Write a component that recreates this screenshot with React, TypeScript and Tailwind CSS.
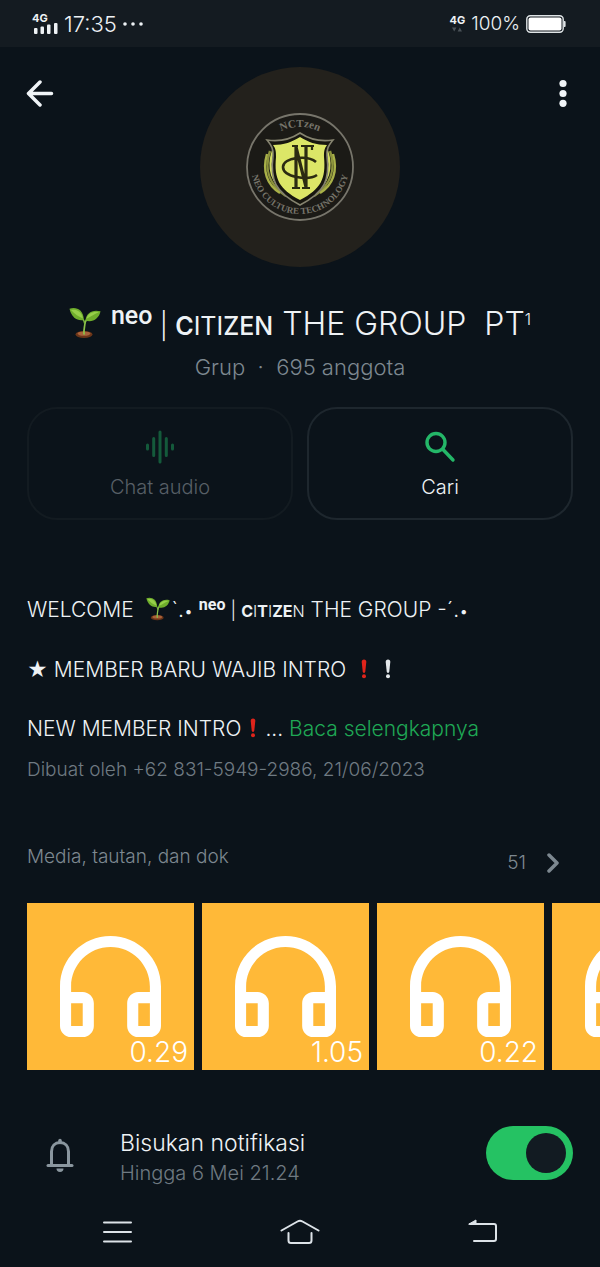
import { useState } from 'react';

const media = [
  { id: 1, duration: '0.29' },
  { id: 2, duration: '1.05' },
  { id: 3, duration: '0.22' },
  { id: 4, duration: '' },
];

function Seedling({ className }: { className: string }) {
  return (
    <svg viewBox="0 0 32 32" className={className} aria-hidden="true">
      <ellipse cx="15" cy="27.5" rx="8.5" ry="3.4" fill="#6b3518" />
      <ellipse cx="15" cy="26.6" rx="6.5" ry="2.2" fill="#a9623a" />
      <path d="M15 27c-.4-4 .6-7 .8-9.500c.2-2.500 1-4 2.200-5.500" fill="none" stroke="#8bc34a" strokeWidth="1.700" strokeLinecap="round" />
      <path d="M15.800 17c-.3-2-.8-3.600-2-5" fill="none" stroke="#7cb342" strokeWidth="1.500" />
      <path d="M14.800 13C9 14.500 2.500 11 .5 1.800 7-.4 14.500 2.500 14.800 13z" fill="#6fae2c" />
      <path d="M14 11.500C10 10 5.500 7 2 3c5-1.200 10.500 1 12 8.500z" fill="#97cf4a" />
      <path d="M16.500 13.500C17 6 23.500 2 31.500 4.300 30 12 23 16 16.500 13.500z" fill="#6fae2c" />
      <path d="M17.500 11.800C18.500 6.500 24 3.800 30 5.300c-4 1.500-8 4.500-12.500 6.500z" fill="#97cf4a" />
    </svg>
  );
}

function Exclamation({ className }: { className: string }) {
  return (
    <svg viewBox="0 0 8 20" className={className} fill="currentColor" aria-hidden="true">
      <path d="M4 .5c1.500 0 2.400 1 2.300 2.400L5.300 12.600c-.1.900-.6 1.400-1.300 1.400s-1.200-.5-1.300-1.400L1.700 2.900C1.600 1.500 2.500.5 4 .5z" />
      <circle cx="4" cy="17.300" r="2" />
    </svg>
  );
}

function StatusBar() {
  return (
    <div className="flex h-[47px] items-center justify-between bg-[#141b21] pr-[34px] pl-8 text-[#eef2f5]">
      <div className="flex items-center">
        <div className="flex w-7 flex-col">
          <span className="text-[11px] leading-[10px] font-bold">4G</span>
          <svg viewBox="0 0 26 11" className="h-[11px] w-[26px]" fill="currentColor" aria-hidden="true">
            <rect x="2" y="5" width="3.500" height="6" rx="1" />
            <rect x="8.500" y="3.500" width="3.500" height="7.500" rx="1" />
            <rect x="15" y="1.500" width="3.500" height="9.500" rx="1" />
            <rect x="22" y="0" width="3.500" height="11" rx="1" />
          </svg>
        </div>
        <span className="ml-1 text-[22px] leading-7 font-light">17:35</span>
        <svg viewBox="0 0 20 4" className="ml-1.5 h-1 w-5" fill="currentColor" aria-hidden="true">
          <circle cx="2" cy="2" r="1.800" />
          <circle cx="10" cy="2" r="1.800" />
          <circle cx="18" cy="2" r="1.800" />
        </svg>
      </div>
      <div className="flex items-center">
        <div className="flex flex-col items-center">
          <span className="text-[11px] leading-[10px] font-bold">4G</span>
          <svg viewBox="0 0 10 5" className="mt-0.5 h-[5px] w-2.5 text-[#4a5258]" fill="currentColor" aria-hidden="true">
            <path d="M0 .5h4.400L2.200 4.500zM5.600 4.500H10L7.800.5z" />
          </svg>
        </div>
        <span className="ml-1.5 text-[19px] leading-7 font-light">100%</span>
        <svg viewBox="0 0 40 18" className="ml-1.5 h-[18px] w-10" aria-hidden="true">
          <rect x=".8" y=".8" width="36.400" height="16.400" rx="3.500" fill="none" stroke="#dfe4e6" strokeWidth="1.400" />
          <rect x="2.500" y="2.500" width="33" height="13" rx="2" fill="#fff" />
          <path d="M38 6h.6a1 1 0 0 1 1 1v4a1 1 0 0 1-1 1H38z" fill="#dfe4e6" />
        </svg>
      </div>
    </div>
  );
}

function GroupAvatar() {
  return (
    <svg viewBox="0 0 200 200" className="size-[200px]" role="img" aria-label="Foto grup">
      <defs>
        <path id="arc-top" d="M56 104a44 44 0 0 1 88 0" />
        <path id="arc-bottom" d="M51 98a49 49 0 0 0 98 0" />
      </defs>
      <circle cx="100" cy="100" r="100" fill="#23211c" />
      <circle cx="100" cy="100" r="53" fill="#1b1a16" stroke="#77756b" strokeWidth="1.800" />
      <g fill="none" strokeWidth="2.400">
        <path d="M70 84c-6 18-1 34 16 45" stroke="#8c933c" />
        <path d="M73 84c-6 18-1 32 14 43" stroke="#d3de62" />
        <path d="M67 87c-5 17 0 31 13 39" stroke="#a9b148" />
        <path d="M130 84c6 18 1 34-16 45" stroke="#8c933c" />
        <path d="M127 84c6 18 1 32-14 43" stroke="#d3de62" />
        <path d="M133 87c5 17 0 31-13 39" stroke="#a9b148" />
      </g>
      <path d="M100 66c-9 6-20 9-33 7 3 4 7 8 6 16-3 24 2 36 27 49 25-13 30-25 27-49-1-8 3-12 6-16-13 2-24-1-33-7z" fill="#17160f" stroke="#85836f" strokeWidth="1.600" />
      <path d="M100 70c-8 5-16 8-27 8 3 4 3 7 3 12-2 22 3 32 24 43 21-11 26-21 24-43 0-5 0-8 3-12-11 0-19-3-27-8z" fill="#dce667" />
      <g fill="none" stroke="#2c2b12">
        <path d="M96 121V80l10 40V80" strokeWidth="3.200" />
        <path d="M92 121h8M92 79h6M101 79h13M112 79v4M102 121h8" strokeWidth="2.200" />
        <path d="M116 95c-8-7-33-5-33 5s25 14 34 8" strokeWidth="2.600" />
      </g>
      <g fill="#77756b" fontFamily="Liberation Serif, serif" fontWeight="700">
        <text fontSize="11" textAnchor="middle">
          <textPath href="#arc-top" startOffset="50%">NCTzen</textPath>
        </text>
        <text fontSize="9" textAnchor="middle">
          <textPath href="#arc-bottom" startOffset="50%">NEO CULTURE TECHNOLOGY</textPath>
        </text>
      </g>
    </svg>
  );
}

function Header() {
  return (
    <header className="flex items-start justify-between px-[26px] pt-5">
      <button type="button" aria-label="Kembali" className="mt-3 text-[#f0f4f7]">
        <svg viewBox="0 0 28 28" className="size-7" fill="none" stroke="currentColor" strokeWidth="3.500" strokeLinecap="round" strokeLinejoin="round">
          <path d="M14 3 2.500 14.500 14 26M3 14.500h22.500" />
        </svg>
      </button>
      <GroupAvatar />
      <button type="button" aria-label="Opsi lainnya" className="mt-3 flex w-7 justify-end pr-[7px] text-[#f0f4f7]">
        <svg viewBox="0 0 8 28" className="h-7 w-2" fill="currentColor">
          <circle cx="4" cy="4.500" r="3.600" />
          <circle cx="4" cy="14.500" r="3.600" />
          <circle cx="4" cy="24.300" r="3.600" />
        </svg>
      </button>
    </header>
  );
}

function Actions() {
  return (
    <div className="mt-[26px] grid grid-cols-2 gap-3.5 px-[27px]">
      <button type="button" disabled className="flex h-[113px] flex-col items-center rounded-[30px] border-2 border-[#131b21] pt-5 text-[#575f66]">
        <svg viewBox="0 0 32 36" className="h-9 w-8 text-[#145a3b]" stroke="currentColor" strokeWidth="3" strokeLinecap="round" aria-hidden="true">
          <path d="M3.500 16v4M9.700 9.500v17M16 3v30M22.300 9.500v17M28.500 16v4" />
        </svg>
        <span className="mt-2.5 text-[20px] leading-6 font-light">Chat audio</span>
      </button>
      <button type="button" className="flex h-[113px] flex-col items-center rounded-[30px] border-2 border-[#1e272e] pt-5 text-[#eef2f5]">
        <svg viewBox="0 0 32 36" className="h-9 w-8 text-[#24b768]" fill="none" stroke="currentColor" strokeWidth="3.400" strokeLinecap="round" aria-hidden="true">
          <circle cx="12" cy="13.500" r="9" />
          <path d="M19 20.500 29 31" />
        </svg>
        <span className="mt-2.5 text-[20px] leading-6 font-light">Cari</span>
      </button>
    </div>
  );
}

function MediaTile({ duration }: { duration: string }) {
  return (
    <a href="#media" className="relative flex size-[167px] shrink-0 items-center justify-center bg-[#ffb938] text-white">
      <svg viewBox="0 0 100 100" className="size-[101px]" aria-hidden="true">
        <path
          fill="currentColor"
          fillRule="evenodd"
          d="M50 0C22.400 0 0 22.400 0 50v39c0 6 5 11 11 11h11.500c6 0 11-5 11-11V66.500c0-6-5-11-11-11H11V50c0-21.500 17.500-39 39-39s39 17.500 39 39v5.500H77.500c-6 0-11 5-11 11V89c0 6 5 11 11 11H89c6 0 11-5 11-11V50C100 22.400 77.600 0 50 0zM11 66.500h11.500V89H11zM77.500 66.500H89V89H77.500z"
        />
      </svg>
      <span className="absolute right-1.5 bottom-0.5 text-[28px] leading-8 font-light">{duration}</span>
    </a>
  );
}

function NavBar() {
  return (
    <nav className="mt-[9px] flex h-[70px] items-center justify-between px-[102px] text-[#dde3e8]">
      <button type="button" aria-label="Menu">
        <svg viewBox="0 0 30 26" className="h-[26px] w-[30px]" stroke="currentColor" strokeWidth="2" strokeLinecap="round">
          <path d="M2 3.500h27M2 13h27M2 22.500h27" />
        </svg>
      </button>
      <button type="button" aria-label="Beranda">
        <svg viewBox="0 0 40 26" className="h-[26px] w-10" fill="none" stroke="currentColor" strokeWidth="2" strokeLinecap="round">
          <path d="M1.500 11.500 17.500 2.500q2.500-1.400 5 0L38.500 11.500M8.500 14v7.500q0 2.500 2.500 2.500h18q2.500 0 2.500-2.500V14" />
        </svg>
      </button>
      <button type="button" aria-label="Kembali ke layar sebelumnya">
        <svg viewBox="0 0 30 26" className="h-[26px] w-[30px]" fill="none" stroke="currentColor" strokeWidth="2" strokeLinecap="round">
          <path d="M2 5h24q2 0 2 2v13q0 2-2 2H6" />
          <path d="M1 5 8 1v4z" fill="currentColor" strokeWidth="1" />
        </svg>
      </button>
    </nav>
  );
}

export default function App() {
  const [muted, setMuted] = useState(true);

  return (
    <div className="min-h-screen overflow-hidden bg-[#0b131a] font-['Inter','Noto_Sans',sans-serif] text-[#eef2f5]">
      <StatusBar />
      <Header />

      <section className="mt-9 text-center">
        <h1 className="text-[32px] leading-[42px] font-light whitespace-pre">
          <Seedling className="mr-2.5 inline-block size-8 align-[-4px]" />
          <span className="align-[11px] font-['Roboto'] text-[25px] leading-none font-medium">neo</span>
          <span className="text-[26px]"> | </span>
          <span className="text-[25px]"><b className="font-semibold">C</b><span className="font-normal">ITI</span><b className="font-medium">ZEN</b></span> THE GROUP  PT<span className="align-[10px] text-[16px] leading-none">1</span>
        </h1>
        <p className="mt-1.5 text-[22px] leading-7 font-light whitespace-pre text-[#7d8890]">Grup  ·  695 anggota</p>
      </section>

      <Actions />

      <section className="mt-[75px] px-[27px] text-[21px] leading-[30px] font-light">
        <p className="whitespace-pre">
          WELCOME  <Seedling className="mr-0.5 inline-block size-6 align-[-4px]" />`.<span className="text-[16px]">•</span>{' '}
          <span className="align-[7px] font-['Roboto'] text-[16px] leading-none font-bold">neo</span>
          <span className="text-[18px]"> | </span>
          <span className="text-[16px]"><b className="font-bold">C</b>I<b className="font-bold">T</b>I<b className="font-bold">ZE</b>N</span> THE GROUP -´.<span className="text-[16px]">•</span>
        </p>
        <p className="mt-[29px]">
          <span className="text-[20px]">★</span> MEMBER BARU WAJIB INTRO
          <Exclamation className="ml-3.5 inline-block h-5 w-2 align-[-2px] text-[#e0241b]" />
          <Exclamation className="ml-4 inline-block h-5 w-2 align-[-2px] text-[#e3e7ea]" />
        </p>
        <p className="mt-[29px]">
          NEW MEMBER INTRO
          <Exclamation className="mx-2 inline-block h-5 w-2 align-[-2px] text-[#e0241b]" />
          ... <a href="#deskripsi" className="text-[#1fa855]">Baca selengkapnya</a>
        </p>
        <p className="mt-3 text-[19px] leading-7 text-[#6f7a82]">Dibuat oleh +62 831-5949-2986, 21/06/2023</p>
      </section>

      <section className="mt-[57px] pl-[27px] font-light text-[#7d8890]">
        <div className="flex items-start justify-between pr-10">
          <h2 className="mt-0.5 text-[19px] leading-7">Media, tautan, dan dok</h2>
          <a href="#media" className="mt-2 flex items-center gap-5 text-[19px] leading-7">
            51
            <svg viewBox="0 0 14 20" className="h-5 w-3.5" fill="none" stroke="currentColor" strokeWidth="3.500" strokeLinecap="round" strokeLinejoin="round" aria-hidden="true">
              <path d="m3 2 8 8-8 8" />
            </svg>
          </a>
        </div>
        <div className="mt-[26px] flex gap-2 overflow-hidden">
          {media.map((item) => (
            <MediaTile key={item.id} duration={item.duration} />
          ))}
        </div>
      </section>

      <section className="mt-14 flex items-start px-[27px]">
        <svg viewBox="0 0 28 34" className="mt-3 ml-[19px] h-[34px] w-7 text-[#8a969e]" fill="none" stroke="currentColor" strokeWidth="3" aria-hidden="true">
          <path d="M5.500 26V13.500C5.500 8 9 4.500 14 4.500s8.500 3.500 8.500 9V26" />
          <path d="M2 27.500h24" strokeLinecap="round" />
          <path d="M14 2.500v2" strokeLinecap="round" strokeWidth="3.500" />
          <path d="M10.500 30.500h7a3.500 3.500 0 0 1-7 0z" fill="currentColor" stroke="none" />
        </svg>
        <label htmlFor="mute" className="mt-0.5 ml-[46px] flex flex-1 flex-col font-light">
          <span className="text-[23px] leading-[30px]">Bisukan notifikasi</span>
          <span className="text-[20px] leading-[30px] text-[#6f7a82]">Hingga 6 Mei 21.24</span>
        </label>
        <input
          id="mute"
          type="checkbox"
          role="switch"
          checked={muted}
          onChange={(e) => setMuted(e.target.checked)}
          className="flex h-[54px] w-[87px] appearance-none items-center justify-start rounded-full bg-[#37434b] px-[7px] before:size-10 before:rounded-full before:bg-[#121b22] checked:justify-end checked:bg-[#25c263]"
        />
      </section>

      <NavBar />
    </div>
  );
}
